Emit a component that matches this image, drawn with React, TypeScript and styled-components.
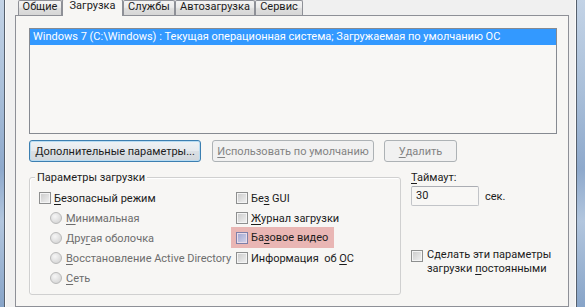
import React from 'react';
import styled, {createGlobalStyle, css} from 'styled-components';

const GlobalStyle = createGlobalStyle`
    html, body {
        margin: 0;
        padding: 0;
        background: #f0f0f0;
    }
    body {
        font-family: Roboto, "Noto Sans", sans-serif;
        font-size: 11px;
        color: #1c1c1c;
    }
`;

const Page = styled.div`
    display: flex;
    width: 585px;
    height: 307px;
    overflow: hidden;
`;

interface FrameProps {
    $side: 'left' | 'right';
}

const FrameEdge = styled.div<FrameProps>`
    flex: none;
    width: ${p => (p.$side === 'left' ? '4px' : '8px')};
    background: linear-gradient(180deg, #c3d3e6 0%, #a9bfd9 30%, #8ea9cc 55%, #b2c6de 72%, #87a4c8 100%);
    ${p => (p.$side === 'left' ? 'border-right: 1px solid #56606d;' : 'border-left: 1px solid #56606d;')}
`;

const Client = styled.div`
    flex: 1;
    display: flex;
    flex-direction: column;
    background: #f0f0f0;
    border-left: 1px solid #fbfbfb;
    border-right: 1px solid #fbfbfb;
    padding: 0 6px 0 9px;
`;

const TabStrip = styled.div`
    display: flex;
    align-items: flex-end;
    height: 15px;
    padding-left: 3px;
    position: relative;
    z-index: 1;
`;

interface TabProps {
    $active?: boolean;
    $width: number;
}

const Tab = styled.div<TabProps>`
    box-sizing: border-box;
    width: ${p => p.$width}px;
    height: 15px;
    border: 1px solid #8e9097;
    border-bottom: none;
    border-radius: 2px 2px 0 0;
    background: linear-gradient(180deg, #f4f4f4 0%, #ebebeb 45%, #dedede 55%, #d6d6d6 100%);
    line-height: 12px;
    text-align: center;
    white-space: nowrap;
    ${p => p.$active && css`
        height: 17px;
        margin-bottom: -1px;
        background: #f7f6f4;
        line-height: 11px;
        position: relative;
        z-index: 2;
    `}
`;

const Panel = styled.div`
    height: 285px;
    border: 1px solid #8e9097;
    background: #f7f6f4;
    padding: 12px 11px 0 13px;
    display: flex;
    flex-direction: column;
`;

const ListBox = styled.div`
    height: 104px;
    border: 1px solid #868a91;
    background: #f8f7f5;
`;

const ListItem = styled.div`
    height: 16px;
    line-height: 16px;
    padding-left: 3px;
    background: #3399ff;
    color: #ffffff;
    white-space: nowrap;
`;

const ButtonRow = styled.div`
    display: flex;
    margin-top: 6px;
`;

interface ButtonProps {
    $width: number;
    $gap?: number;
    $focused?: boolean;
    disabled?: boolean;
}

const Button = styled.div<ButtonProps>`
    box-sizing: border-box;
    width: ${p => p.$width}px;
    height: 22px;
    margin-left: ${p => p.$gap || 0}px;
    border: 1px solid #707070;
    border-radius: 3px;
    background: linear-gradient(180deg, #f2f2f2 0%, #ebebeb 48%, #dddddd 52%, #cfcfcf 100%);
    display: flex;
    align-items: center;
    justify-content: center;
    white-space: nowrap;
    ${p => p.$focused && css`
        border-color: #3c7fb1;
        box-shadow: inset 0 0 0 1px #b9dcf2;
        background: linear-gradient(180deg, #eef2f5 0%, #e6eaee 48%, #dadfe4 52%, #d2d7dc 100%);
    `}
    ${p => p.disabled && css`
        border-color: #adb2b5;
        background: #f1f1f1;
        color: #838383;
    `}
`;

const BottomSection = styled.div`
    display: flex;
    margin-top: 8px;
`;

const GroupBox = styled.div`
    position: relative;
    box-sizing: border-box;
    width: 372px;
    margin-top: 7px;
    height: 118px;
    border: 1px solid #d0d0d0;
    border-radius: 3px;
    box-shadow: inset 1px 1px 0 #ffffff;
    padding: 10px 0 0 9px;
    display: flex;
`;

const Legend = styled.div`
    position: absolute;
    top: -8px;
    left: 5px;
    padding: 0 2px;
    line-height: 15px;
    background: #f7f6f4;
`;

interface ColumnProps {
    $width?: number;
}

const Column = styled.div<ColumnProps>`
    display: flex;
    flex-direction: column;
    width: ${p => (p.$width ? `${p.$width}px` : 'auto')};
`;

interface OptionProps {
    $indent?: number;
    $highlight?: boolean;
    $disabled?: boolean;
}

const Option = styled.div<OptionProps>`
    display: flex;
    align-items: center;
    height: 20px;
    margin-left: ${p => p.$indent || 0}px;
    white-space: pre;
    color: ${p => (p.$disabled ? '#6d6d6d' : '#1c1c1c')};
    ${p => p.$highlight && css`
        align-self: flex-start;
        margin-left: -5px;
        padding: 0 6px 0 5px;
        height: 21px;
        margin-top: -1px;
        background: #e9b6b4;
    `}
`;

interface BoxProps {
    $tint?: boolean;
}

const CheckBox = styled.span<BoxProps>`
    flex: none;
    box-sizing: border-box;
    width: 12px;
    height: 12px;
    margin-right: 3px;
    border: 1px solid #8e8f8f;
    background: linear-gradient(135deg, #c9c9c9 0%, #e2e2e2 60%, #f2f2f2 100%);
    box-shadow: inset 0 0 0 1px #f4f4f4;
    ${p => p.$tint && css`
        border-color: #7d7fa8;
        background: linear-gradient(135deg, #9fa3cf 0%, #bfc2e0 60%, #d6d6ea 100%);
        box-shadow: inset 0 0 0 1px #e9dbe8;
    `}
`;

const Radio = styled.span`
    flex: none;
    box-sizing: border-box;
    width: 12px;
    height: 12px;
    margin-right: 4px;
    border-radius: 50%;
    border: 1px solid #b9b9b9;
    background: radial-gradient(circle at 40% 35%, #f6f6f6 0%, #dedede 60%, #cdcdcd 100%);
`;

const U = styled.span`
    text-decoration: underline;
    text-underline-offset: 2px;
`;

const SideColumn = styled.div`
    display: flex;
    flex-direction: column;
    margin-left: 10px;
    white-space: nowrap;
`;

const FieldLabel = styled.div`
    line-height: 15px;
`;

const TimeoutRow = styled.div`
    display: flex;
    align-items: center;
    margin-top: 1px;
`;

const TextInput = styled.div`
    box-sizing: border-box;
    width: 68px;
    height: 20px;
    border: 1px solid #c2c4c8;
    border-top-color: #abadb3;
    border-radius: 2px;
    background: #f8f7f5;
    padding-left: 4px;
    line-height: 18px;
`;

const Unit = styled.span`
    margin-left: 6px;
`;

const PermanentRow = styled.div`
    display: flex;
    align-items: flex-start;
    margin-top: 42px;
    line-height: 14px;

    ${CheckBox} {
        margin-top: 2px;
        margin-right: 4px;
    }
`;

const tabs = [
    {label: 'Общие', width: 44},
    {label: 'Загрузка', width: 61, active: true},
    {label: 'Службы', width: 52},
    {label: 'Автозагрузка', width: 80},
    {label: 'Сервис', width: 48},
];

export default function App() {
    return (
        <>
            <GlobalStyle />
            <Page>
                <FrameEdge $side="left" />
                <Client>
                    <TabStrip>
                        {tabs.map(t => (
                            <Tab key={t.label} $width={t.width} $active={t.active}>{t.label}</Tab>
                        ))}
                    </TabStrip>
                    <Panel>
                        <ListBox>
                            <ListItem>Windows 7 (C:\Windows) : Текущая операционная система; Загружаемая по умолчанию ОС</ListItem>
                        </ListBox>
                        <ButtonRow>
                            <Button $width={172} $focused>Дополнительные параметры...</Button>
                            <Button $width={162} $gap={11} disabled><U>И</U>спользовать по умолчанию</Button>
                            <Button $width={73} $gap={10} disabled><U>У</U>далить</Button>
                        </ButtonRow>
                        <BottomSection>
                            <GroupBox>
                                <Legend>Параметры загрузки</Legend>
                                <Column $width={197}>
                                    <Option><CheckBox /><U>Б</U>езопасный режим</Option>
                                    <Option $indent={11} $disabled><Radio /><U>М</U>инимальная</Option>
                                    <Option $indent={11} $disabled><Radio />Дру<U>г</U>ая оболочка</Option>
                                    <Option $indent={11} $disabled><Radio /><U>В</U>осстановление Active Directory</Option>
                                    <Option $indent={11} $disabled><Radio /><U>С</U>еть</Option>
                                </Column>
                                <Column>
                                    <Option><CheckBox />Бе<U>з</U> GUI</Option>
                                    <Option><CheckBox /><U>Ж</U>урнал загрузки</Option>
                                    <Option $highlight><CheckBox $tint />Ба<U>з</U>овое видео</Option>
                                    <Option><CheckBox />Информация  об <U>О</U>С</Option>
                                </Column>
                            </GroupBox>
                            <SideColumn>
                                <FieldLabel><U>Т</U>аймаут:</FieldLabel>
                                <TimeoutRow>
                                    <TextInput>30</TextInput>
                                    <Unit>сек.</Unit>
                                </TimeoutRow>
                                <PermanentRow>
                                    <CheckBox />
                                    <div>Сделать эти параметры<br />загрузки <U>п</U>остоянными</div>
                                </PermanentRow>
                            </SideColumn>
                        </BottomSection>
                    </Panel>
                </Client>
                <FrameEdge $side="right" />
            </Page>
        </>
    );
}
